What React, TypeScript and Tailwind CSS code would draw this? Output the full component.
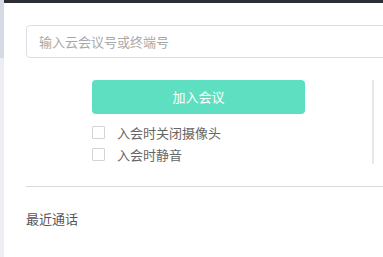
import React from "react";

export default function App() {
  return (
    <div
      className="w-[383px] h-[257px] overflow-hidden bg-white flex"
      style={{ fontFamily: '"Noto Sans CJK SC", "Noto Sans", sans-serif' }}
    >
      <div className="w-[4px] flex flex-col shrink-0">
        <div className="h-[58px] bg-[#d6dae4]" />
        <div className="flex-1 bg-[#eceef4]" />
      </div>
      <div className="flex-1 flex flex-col min-w-0">
        <div className="h-[3px] bg-[#2b2e35] shrink-0" />
        <div className="pl-[22px] flex flex-col">
          <div className="mt-[22px] h-[33px] w-[420px] border border-[#dcdfe6] rounded-[4px] flex items-center pl-[12px] text-[13px] text-[#a8a8a8] shrink-0">
            输入云会议号或终端号
          </div>
          <div className="mt-[22px] flex items-start pl-[66px]">
            <div className="flex flex-col w-[213px]">
              <div className="h-[34px] rounded-[4px] bg-[#5fdfc2] flex items-center justify-center text-white text-[13px]">
                加入会议
              </div>
              <div className="mt-[12px] flex items-center h-[13px]">
                <span className="w-[13px] h-[13px] border border-[#d4d4d4] rounded-[1px] bg-white shrink-0" />
                <span className="ml-[12px] text-[13px] text-[#666] leading-none">入会时关闭摄像头</span>
              </div>
              <div className="mt-[9px] flex items-center h-[13px]">
                <span className="w-[13px] h-[13px] border border-[#d4d4d4] rounded-[1px] bg-white shrink-0" />
                <span className="ml-[12px] text-[13px] text-[#666] leading-none">入会时静音</span>
              </div>
            </div>
            <div className="ml-[67px] w-[2px] h-[84px] bg-[#e8e8e8]" />
          </div>
          <div className="mt-[22px] h-[1px] w-[400px] bg-[#dadada]" />
          <div className="mt-[25px] text-[13px] text-[#555] leading-none">最近通话</div>
        </div>
      </div>
    </div>
  );
}
